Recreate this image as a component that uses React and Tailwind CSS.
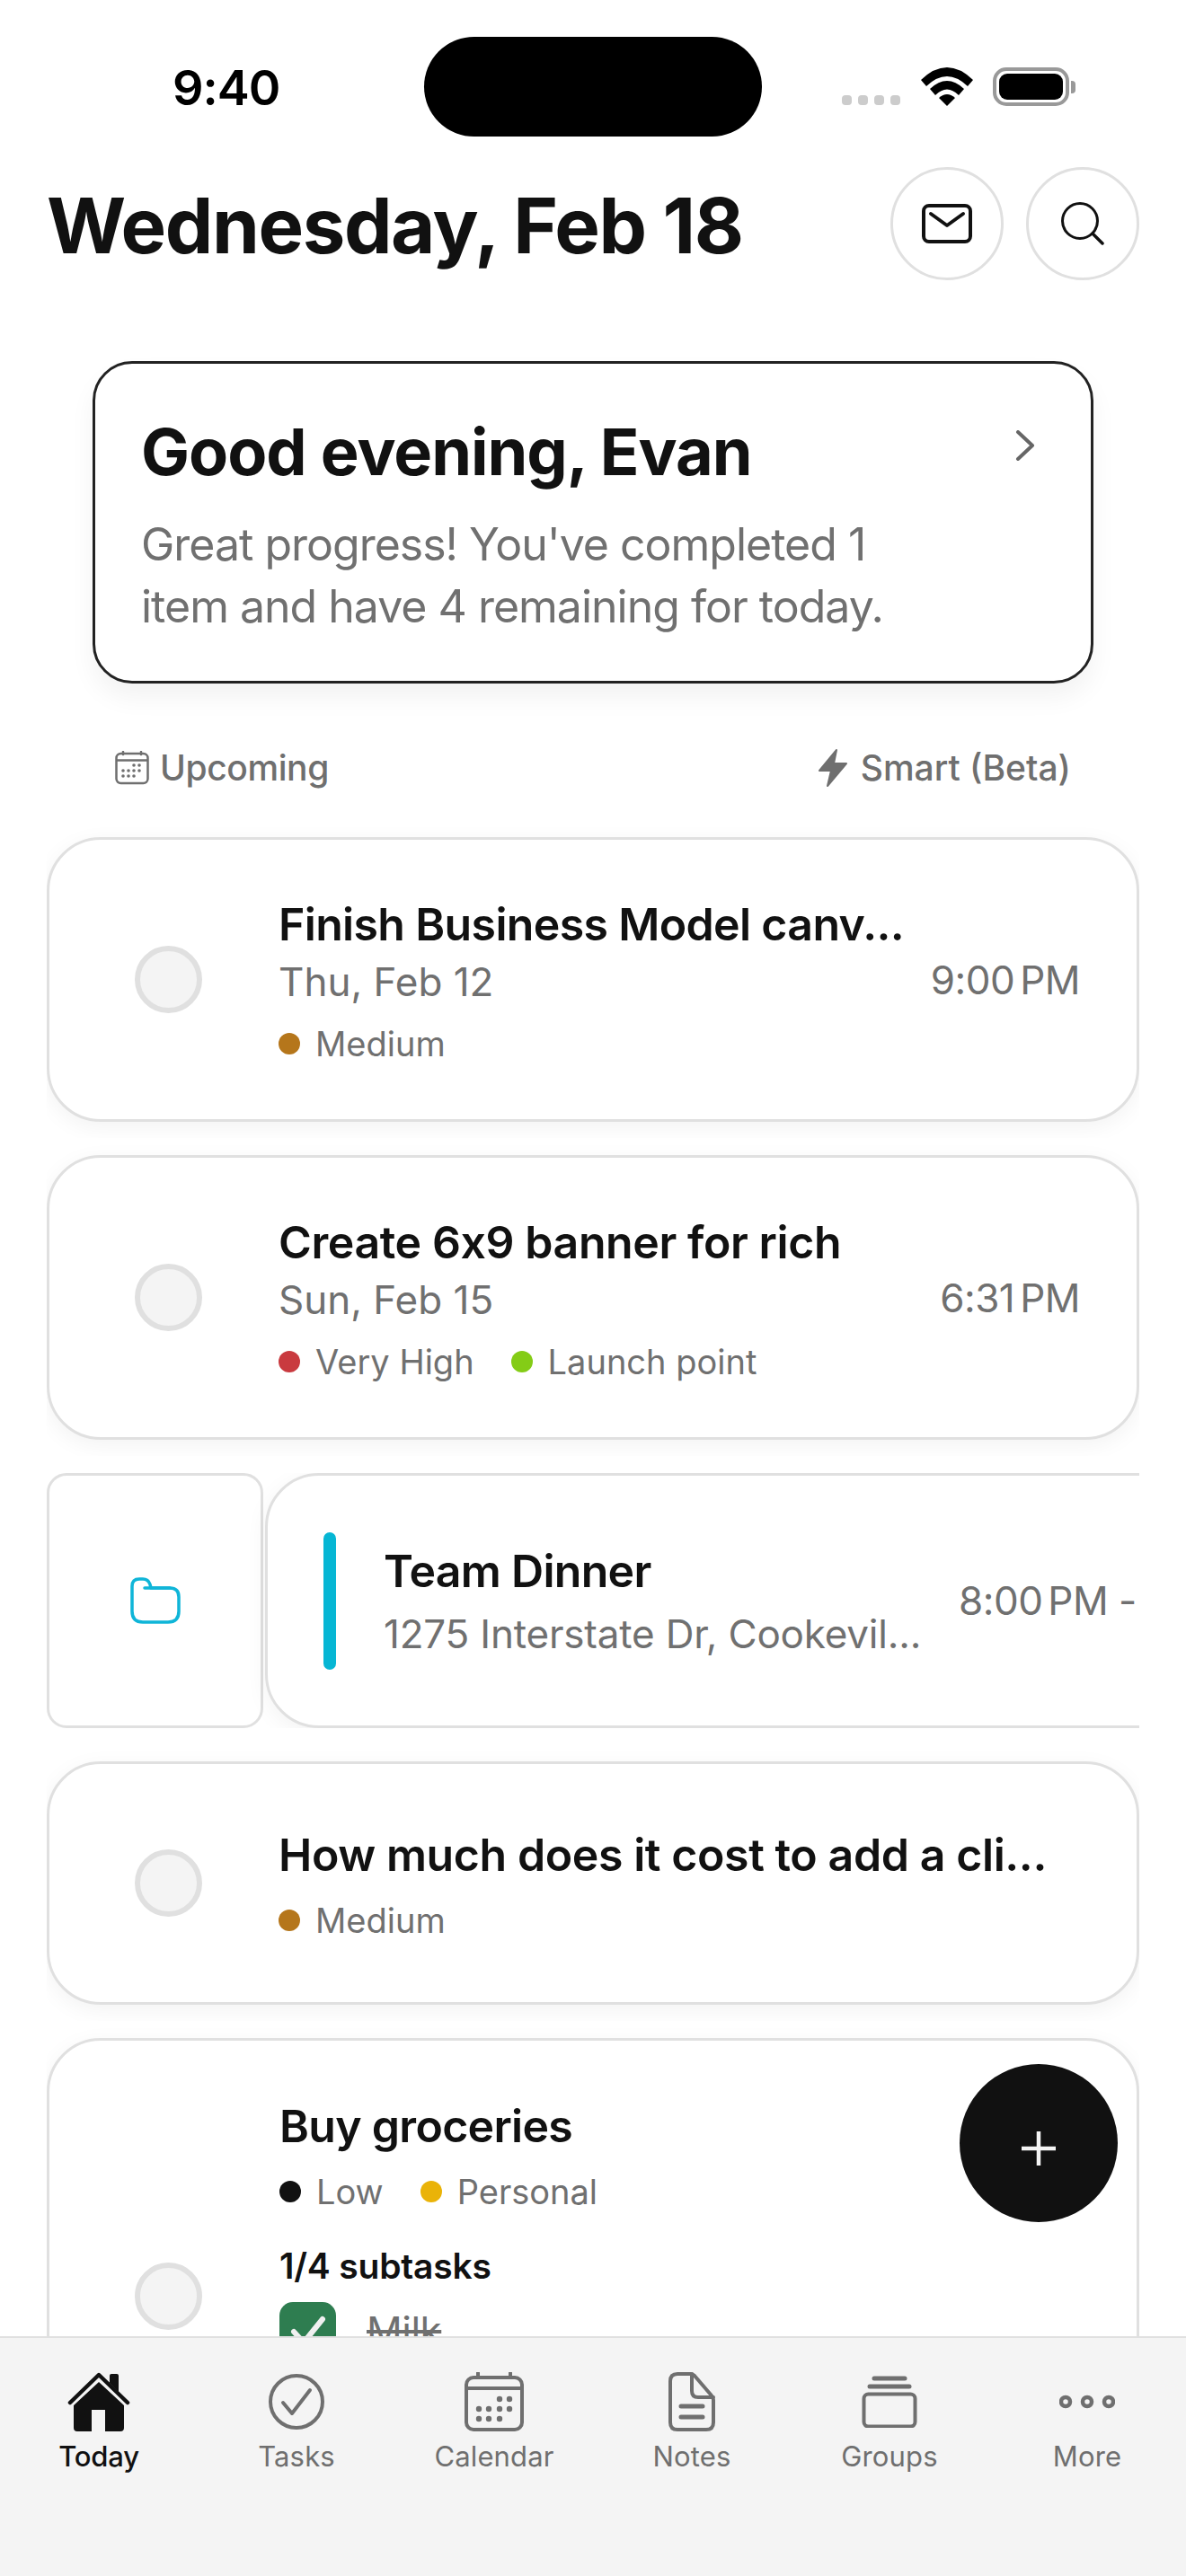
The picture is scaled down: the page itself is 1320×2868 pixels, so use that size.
import React from 'react';

const CARD_SHADOW = 'shadow-[0_6px_24px_rgba(0,0,0,0.05)]';

const WifiIcon = () => (
  <svg width="58" height="43" viewBox="0 0 58 43" fill="#000">
    <path d="M0 14 Q29 -14 58 14 L52 21 Q29 -1 6 21 Z" />
    <path d="M10 24 Q29 6 48 24 L42 31 Q29 18 16 31 Z" />
    <path d="M20 34 Q29 26 38 34 L29 43 Z" />
  </svg>
);

const Battery = () => (
  <div className="flex items-center gap-[2px]">
    <div className="w-[85px] h-[43px] rounded-[15px] border-[4px] border-[#999] p-[3px]">
      <div className="w-full h-full rounded-[9px] bg-black" />
    </div>
    <div className="w-[5px] h-[14px] rounded-r-[4px] bg-[#999]" />
  </div>
);

const StatusBar = () => (
  <div className="relative h-[186px] shrink-0">
    <div className="absolute left-[192px] top-[67px] text-[54px] leading-[62px] font-semibold tracking-[-1px] text-black">9:40</div>
    <div className="absolute left-[472px] top-[41px] w-[376px] h-[111px] rounded-full bg-black" />
    <div className="absolute left-[937px] top-[106px] flex gap-[7px]">
      {[0, 1, 2, 3].map((i) => (
        <div key={i} className="w-[11px] h-[11px] rounded-[4px] bg-[#ccc]" />
      ))}
    </div>
    <div className="absolute left-[1025px] top-[75px]">
      <WifiIcon />
    </div>
    <div className="absolute left-[1105px] top-[75px]">
      <Battery />
    </div>
  </div>
);

const RoundButton = ({ children }) => (
  <button className="w-[126px] h-[126px] rounded-full border-[3px] border-[#e0e0e0] bg-white flex items-center justify-center">
    {children}
  </button>
);

const Header = () => (
  <div className="flex items-center justify-between px-[52px] h-[126px]">
    <h1 className="pt-[6px] text-[85px] leading-[100px] font-bold tracking-[-1.4px] text-[#111]">Wednesday, Feb 18</h1>
    <div className="flex gap-[25px]">
      <RoundButton>
        <svg width="56" height="44" viewBox="0 0 56 44" fill="none" stroke="#111" strokeWidth="4" strokeLinecap="round" strokeLinejoin="round">
          <rect x="2" y="2" width="52" height="40" rx="6" />
          <path d="M10 11 L28 24 L46 11" />
        </svg>
      </RoundButton>
      <RoundButton>
        <svg width="48" height="48" viewBox="0 0 48 48" fill="none" stroke="#111" strokeWidth="3" strokeLinecap="round">
          <circle cx="21" cy="21" r="19.5" />
          <path d="M35 35 L46 46" strokeWidth="3.5" />
        </svg>
      </RoundButton>
    </div>
  </div>
);

const GreetingCard = () => (
  <div className="relative mx-[103px] mt-[90px] h-[359px] rounded-[44px] border-[3px] border-[#222] bg-white pl-[51px] pt-[56px] shadow-[0_16px_28px_rgba(0,0,0,0.05)]">
    <h2 className="text-[72px] leading-[84px] font-bold tracking-[-1px] text-[#111]">Good evening, Evan</h2>
    <p className="mt-[27px] w-[900px] text-[50px] leading-[69px] tracking-[-1px] text-[#707070]">
      Great progress! You've completed 1 item and have 4 remaining for today.
    </p>
    <svg className="absolute right-[62px] top-[74px]" width="22" height="34" viewBox="0 0 22 34" fill="none" stroke="#666" strokeWidth="4" strokeLinecap="round" strokeLinejoin="round">
      <path d="M3 2 L19 17 L3 32" />
    </svg>
  </div>
);

const SmallCalendar = () => (
  <svg width="38" height="38" viewBox="0 0 38 38" fill="none" stroke="#6f6f6f" strokeWidth="2.5">
    <rect x="1.5" y="3" width="35" height="33" rx="5" />
    <path d="M1.5 10.5 H36.5" />
    <path d="M9 1 V4 M29 1 V4" strokeLinecap="round" />
    <g fill="#6f6f6f" stroke="none">
      <circle cx="21" cy="16" r="1.8" /><circle cx="27" cy="16" r="1.8" />
      <circle cx="9" cy="22" r="1.8" /><circle cx="15" cy="22" r="1.8" /><circle cx="21" cy="22" r="1.8" /><circle cx="27" cy="22" r="1.8" />
      <circle cx="9" cy="28" r="1.8" /><circle cx="15" cy="28" r="1.8" /><circle cx="21" cy="28" r="1.8" />
    </g>
  </svg>
);

const SectionRow = () => (
  <div className="flex items-center justify-between px-[128px] h-[46px] mt-[71px]">
    <div className="flex items-center gap-[12px]">
      <SmallCalendar />
      <span className="text-[39px] leading-[46px] font-medium tracking-[-0.4px] text-[#6f6f6f]">Upcoming</span>
    </div>
    <div className="flex items-center gap-[14px]">
      <svg width="34" height="44" viewBox="0 0 34 44" fill="#6f6f6f" stroke="#6f6f6f" strokeWidth="2" strokeLinejoin="round">
        <path d="M21 2 L2 25 H15 L11 42 L32 17 H18 Z" />
      </svg>
      <span className="text-[39px] leading-[46px] font-medium text-[#6f6f6f]">Smart (Beta)</span>
    </div>
  </div>
);

const Circle = () => (
  <div className="w-[75px] h-[75px] rounded-full border-[6px] border-[#e0e0e0] bg-[#f4f4f4] shrink-0" />
);

const Tag = ({ color, label }) => (
  <span className="flex items-center gap-[17px]">
    <span className="w-[24px] h-[24px] rounded-full" style={{ backgroundColor: color }} />
    <span className="text-[38px] leading-[46px] text-[#707070]">{label}</span>
  </span>
);

// each row clips its own shadow, which gives the faint bands between the cards
const Row = ({ children }) => (
  <div className="overflow-hidden pt-[19px] pb-[18px]">{children}</div>
);

const TaskCard = ({ title, date, time, tags, height, titleTracking = 'tracking-[-0.4px]' }) => (
  <div className={`rounded-[60px] border-[3px] border-[#e0e0e0] bg-white flex items-center pl-[95px] pr-[63px] ${CARD_SHADOW}`} style={{ height }}>
    <Circle />
    <div className="ml-[85px] pt-[3px] flex-1 min-w-0">
      <div className={`text-[50px] leading-[60px] font-semibold ${titleTracking} text-[#111] whitespace-nowrap`}>{title}</div>
      {date && <div className="text-[44px] leading-[52px] text-[#707070] mt-[8px]">{date}</div>}
      <div className="flex gap-[41px] mt-[20px]">
        {tags.map((t) => <Tag key={t.label} color={t.color} label={t.label} />)}
      </div>
    </div>
    {time && <div className="text-[44px] text-[#707070] tracking-[-0.5px] [word-spacing:-6px] shrink-0">{time}</div>}
  </div>
);

const SwipedEvent = () => (
  <div className="flex gap-[2px] overflow-hidden h-[284px]">
    <div className="w-[241px] shrink-0 rounded-[22px] border-[3px] border-[#e0e0e0] bg-white flex items-center justify-center">
      <svg width="56" height="52" viewBox="0 0 56 52" fill="none" stroke="#0fb5d8" strokeWidth="3.5" strokeLinejoin="round" strokeLinecap="round">
        <path d="M2 38 V10 Q2 2 10 2 H14 Q20 2 22 8 L23 12 H44 Q54 12 54 22 V38 Q54 50 42 50 H14 Q2 50 2 38 Z" />
        <path d="M16 12 H44" />
      </svg>
    </div>
    <div className={`w-[1200px] shrink-0 rounded-[60px] border-[3px] border-[#e0e0e0] bg-white flex items-center pl-[62px] ${CARD_SHADOW}`}>
      <div className="w-[14px] h-[153px] rounded-full bg-[#06b6d4] shrink-0" />
      <div className="ml-[53px] w-[640px] shrink-0">
        <div className="text-[50px] leading-[60px] font-semibold tracking-[-0.7px] text-[#111]">Team Dinner</div>
        <div className="text-[44px] leading-[52px] text-[#707070] tracking-[-0.2px] mt-[14px] whitespace-nowrap">1275 Interstate Dr, Cookevil...</div>
      </div>
      <div className="text-[44px] text-[#707070] tracking-[-0.5px] whitespace-nowrap">
        <span className="[word-spacing:-6px]">8:00 PM</span> -
      </div>
    </div>
  </div>
);

const GroceriesCard = () => (
  <div className={`relative rounded-[60px] border-[3px] border-[#e0e0e0] bg-white h-[500px] pl-[256px] pt-[65px] ${CARD_SHADOW}`}>
    <div className="absolute left-[95px] top-[247px]"><Circle /></div>
    <div className="text-[50px] leading-[60px] font-semibold tracking-[-0.7px] text-[#111]">Buy groceries</div>
    <div className="flex gap-[41px] mt-[20px]">
      <Tag color="#111" label="Low" />
      <Tag color="#eab308" label="Personal" />
    </div>
    <div className="text-[39px] leading-[46px] font-semibold tracking-[-0.2px] text-[#111] mt-[37px]">1/4 subtasks</div>
    <div className="flex items-center gap-[34px] mt-[17px]">
      <div className="w-[63px] h-[63px] rounded-[15px] bg-[#2e7d50] flex items-center justify-center shrink-0">
        <svg width="40" height="34" viewBox="0 0 40 34" fill="none" stroke="#f0f0f0" strokeWidth="6" strokeLinecap="round" strokeLinejoin="round">
          <path d="M4 18 L15 30 L36 4" />
        </svg>
      </div>
      <span className="text-[44px] leading-[52px] tracking-[-0.5px] text-[#707070] line-through">Milk</span>
    </div>
  </div>
);

const HomeIcon = () => (
  <svg width="70" height="66" viewBox="0 0 70 66" fill="#111">
    <path d="M49 2 H55 Q57 2 57 4 V22 L47 12 V4 Q47 2 49 2 Z" />
    <path d="M3 34 L35 3 L67 34" fill="none" stroke="#111" strokeWidth="4.5" strokeLinecap="round" strokeLinejoin="round" />
    <path d="M35 11 L63 37 V62 Q63 66 59 66 H42 V42 H27 V66 H11 Q7 66 7 62 V37 Z" />
  </svg>
);

const TabIcons = {
  Tasks: () => (
    <svg width="62" height="62" viewBox="0 0 62 62" fill="none" stroke="#6f6f6f" strokeWidth="4" strokeLinecap="round" strokeLinejoin="round">
      <circle cx="31" cy="31" r="29" />
      <path d="M16 32 L26 44 L46 18" />
    </svg>
  ),
  Calendar: () => (
    <svg width="66" height="66" viewBox="0 0 66 66" fill="none" stroke="#6f6f6f" strokeWidth="4">
      <rect x="2" y="6" width="62" height="58" rx="8" />
      <path d="M2 18 H64" />
      <path d="M15 1 V6 M51 1 V6" strokeLinecap="round" />
      <g fill="#6f6f6f" stroke="none">
        <circle cx="39" cy="30" r="3.2" /><circle cx="50" cy="30" r="3.2" />
        <circle cx="16" cy="41" r="3.2" /><circle cx="27" cy="41" r="3.2" /><circle cx="39" cy="41" r="3.2" /><circle cx="50" cy="41" r="3.2" />
        <circle cx="16" cy="52" r="3.2" /><circle cx="27" cy="52" r="3.2" /><circle cx="39" cy="52" r="3.2" />
      </g>
    </svg>
  ),
  Notes: () => (
    <svg width="52" height="66" viewBox="0 0 52 66" fill="none" stroke="#6f6f6f" strokeWidth="4" strokeLinecap="round" strokeLinejoin="round">
      <path d="M10 2 H25 Q27 2 29 4 L47 25 Q50 28 50 31 V56 Q50 64 42 64 H10 Q2 64 2 56 V10 Q2 2 10 2 Z" />
      <path d="M26 2 V21 Q26 28 33 28 H50" />
      <path d="M14 38 H38 M14 50 H38" strokeWidth="5" />
    </svg>
  ),
  Groups: () => (
    <svg width="62" height="58" viewBox="0 0 62 58" fill="none" stroke="#6f6f6f" strokeLinecap="round">
      <path d="M14 3 H48" strokeWidth="5" />
      <path d="M9 12 H53" strokeWidth="5" />
      <rect x="2.5" y="20.5" width="57" height="36" rx="5" strokeWidth="4" />
    </svg>
  ),
  More: () => (
    <svg width="62" height="66" viewBox="0 0 62 66" fill="none" stroke="#6f6f6f" strokeWidth="4.5">
      <circle cx="7" cy="33" r="5" /><circle cx="31" cy="33" r="5" /><circle cx="55" cy="33" r="5" />
    </svg>
  ),
};

const TABS = ['Today', 'Tasks', 'Calendar', 'Notes', 'Groups', 'More'];

const TabBar = () => (
  <div className="absolute left-0 right-0 bottom-0 h-[267px] bg-[#f4f4f4] border-t-2 border-[#e0e0e0] grid grid-cols-6 pt-[38px]">
    {TABS.map((name) => {
      const Icon = TabIcons[name];
      return (
        <div key={name} className="flex flex-col items-center">
          <div className="h-[66px] flex items-center justify-center">
            {name === 'Today' ? <HomeIcon /> : <Icon />}
          </div>
          <span className={`mt-[10px] text-[31px] leading-[36px] ${name === 'Today' ? 'font-medium tracking-[-0.2px] text-[#111]' : 'tracking-[0.15px] text-[#6f6f6f]'}`}>
            {name}
          </span>
        </div>
      );
    })}
  </div>
);

const Fab = () => (
  <div className="absolute left-[1068px] top-[2298px] w-[176px] h-[176px] pt-[11px] rounded-full bg-[#111] flex items-center justify-center">
    <svg width="38" height="38" viewBox="0 0 38 38" stroke="#f4f4f4" strokeWidth="4.5">
      <path d="M19 0 V38 M0 19 H38" />
    </svg>
  </div>
);

export default function App() {
  return (
    <div className='relative w-[1320px] h-[2868px] overflow-hidden bg-white font-["Inter",sans-serif]'>
      <StatusBar />
      <Header />
      <GreetingCard />
      <SectionRow />
      <div className="mt-[35px] mx-[52px] flex flex-col">
        <Row>
          <TaskCard
            title="Finish Business Model canv..."
            titleTracking="tracking-[-0.65px]"
            date="Thu, Feb 12"
            time="9:00 PM"
            height={317}
            tags={[{ color: '#b5761b', label: 'Medium' }]}
          />
        </Row>
        <Row>
          <TaskCard
            title="Create 6x9 banner for rich"
            date="Sun, Feb 15"
            time="6:31 PM"
            height={317}
            tags={[{ color: '#c93a3f', label: 'Very High' }, { color: '#84cc16', label: 'Launch point' }]}
          />
        </Row>
        <Row>
          <SwipedEvent />
        </Row>
        <Row>
          <TaskCard
            title="How much does it cost to add a cli..."
            height={271}
            tags={[{ color: '#b5761b', label: 'Medium' }]}
          />
        </Row>
        <Row>
          <GroceriesCard />
        </Row>
      </div>
      <TabBar />
      <Fab />
    </div>
  );
}
